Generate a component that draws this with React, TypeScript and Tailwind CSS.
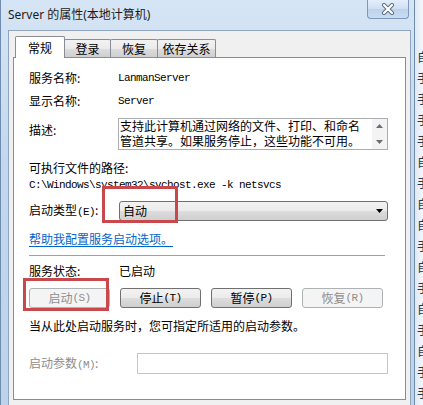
const mono = "font-['Liberation_Mono','Noto_Sans_CJK_SC',monospace] text-[11px] tracking-[-0.6px]"

function Btn({ cjk, key2, disabled }: { cjk: string; key2: string; disabled?: boolean }) {
  return (
    <div
      className={
        disabled
          ? 'w-[81px] h-[20px] rounded-[3px] border border-[#adb2b5] bg-[#f4f4f4] text-[#8d8d8d] flex items-center justify-center'
          : 'w-[81px] h-[20px] rounded-[3px] border border-[#707070] bg-[linear-gradient(#f2f2f2,#ebebeb_50%,#dddddd_50%,#cfcfcf)] flex items-center justify-center'
      }
    >
      <span className="leading-[16px]">{cjk}</span>
      <span className={mono}>({key2})</span>
    </div>
  )
}

function Tab({ label, w, active }: { label: string; w: string; active?: boolean }) {
  return active ? (
    <div className={`${w} h-[22px] -mb-px relative z-10 bg-white border border-b-0 border-[#898c95] rounded-t-[2px] flex items-start justify-center pt-[3px] leading-[16px]`}>
      {label}
    </div>
  ) : (
    <div className={`${w} h-[18px] -ml-px border border-b-0 border-[#898c95] rounded-t-[2px] bg-[linear-gradient(#f2f2f2,#ebebeb_50%,#dddddd_50%,#cfcfcf)] flex items-start justify-center pt-[1px] leading-[16px]`}>
      {label}
    </div>
  )
}

export default function App() {
  return (
    <div className="w-[423px] h-[405px] overflow-hidden flex bg-white font-['Noto_Sans_CJK_SC',sans-serif] text-[12px] text-black">
      {/* window frame */}
      <div className="w-[415px] h-full flex flex-col bg-[linear-gradient(#d6e5f5,#c3d8ee_40%,#bcd3eb)] border-l border-r border-[#6f8bad]">
        {/* title bar */}
        <div className="h-[30px] flex items-start justify-between">
          <div className="pl-[7px] pt-[7px] leading-[16px] font-['Noto_Sans','Noto_Sans_CJK_SC',sans-serif] text-[#1b1b1b]">
            Server 的属性(本地计算机)
          </div>
          <div className="mr-[5px] w-[42px] h-[19px] rounded-b-[4px] border border-t-0 border-[#7d98ba] bg-[linear-gradient(#e4eefa,#cddff3_50%,#bcd2ec_50%,#c9dcf1)] flex items-center justify-center">
            <svg width="14" height="12" viewBox="0 0 14 12">
              <path d="M3 2 L11 10 M11 2 L3 10" stroke="#59687a" strokeWidth="4" strokeLinecap="round" />
              <path d="M3 2 L11 10 M11 2 L3 10" stroke="#ffffff" strokeWidth="2.2" strokeLinecap="round" />
            </svg>
          </div>
        </div>

        {/* client area */}
        <div className="flex-1 ml-[7px] mr-[3px] bg-[#f0f0f0] border border-b-0 border-[#8ea4bf] px-[4px] pt-[5px] flex flex-col">
          {/* tabs */}
          <div className="flex items-end ml-[2px]">
            <Tab label="常规" w="w-[50px]" active />
            <Tab label="登录" w="w-[47px]" />
            <Tab label="恢复" w="w-[48px]" />
            <Tab label="依存关系" w="w-[59px]" />
          </div>

          {/* tab panel */}
          <div className="relative h-[343px] bg-white border border-[#898c95] pl-[15px] pr-[17px] flex flex-col">
            <div className="mt-[12px] flex leading-[16px]">
              <div className="w-[89px]">服务名称:</div>
              <div className={mono + ' leading-[16px]'}>LanmanServer</div>
            </div>
            <div className="mt-[7px] flex leading-[16px]">
              <div className="w-[89px]">显示名称:</div>
              <div className={mono + ' leading-[16px]'}>Server</div>
            </div>
            <div className="mt-[9px] flex">
              <div className="w-[89px] pt-[4px] leading-[16px]">描述:</div>
              <div className="flex-1 h-[32px] border border-[#abadb3] flex">
                <div className="flex-1 pl-[1px] leading-[15px] -mt-[1px] overflow-hidden">
                  <div>支持此计算机通过网络的文件、打印、和命名</div>
                  <div>管道共享。如果服务停止，这些功能不可用。</div>
                </div>
                <div className="w-[15px] bg-[#f3f3f3] flex flex-col items-center justify-between py-[5px]">
                  <svg width="7" height="4" viewBox="0 0 7 4"><path d="M0 4 L3.5 0 L7 4 Z" fill="#6e6e6e" /></svg>
                  <svg width="7" height="4" viewBox="0 0 7 4"><path d="M0 0 L7 0 L3.5 4 Z" fill="#6e6e6e" /></svg>
                </div>
              </div>
            </div>
            <div className="mt-[10px] leading-[16px]">可执行文件的路径:</div>
            <div className={mono + ' leading-[16px] mt-[1px]'}>C:\Windows\system32\svchost.exe -k netsvcs</div>
            <div className="mt-[8px] flex items-center h-[20px]">
              <div className="w-[90px] leading-[16px]">
                启动类型<span className={mono}>(E)</span>:
              </div>
              <div className="flex-1 h-[20px] rounded-[3px] border border-[#707070] bg-[linear-gradient(#f2f2f2,#ebebeb_50%,#dddddd_50%,#cfcfcf)] flex items-center justify-between pl-[3px] pr-[4px]">
                <span className="leading-[16px]">自动</span>
                <svg width="7" height="4" viewBox="0 0 7 4"><path d="M0 0 L7 0 L3.5 4 Z" fill="#000" /></svg>
              </div>
            </div>
            <div className="mt-[10px] leading-[16px] text-[#0066cc] underline underline-offset-2">帮助我配置服务启动选项。</div>
            <div className="mt-[8px] mr-[3px] border-t border-[#a0a0a0] border-b border-b-white" />
            <div className="mt-[6px] flex leading-[16px]">
              <div className="w-[90px]">服务状态:</div>
              <div>已启动</div>
            </div>
            <div className="mt-[9px] flex gap-[10px]">
              <Btn cjk="启动" key2="S" disabled />
              <Btn cjk="停止" key2="T" />
              <Btn cjk="暂停" key2="P" />
              <Btn cjk="恢复" key2="R" disabled />
            </div>
            <div className="mt-[10px] leading-[16px]">当从此处启动服务时，您可指定所适用的启动参数。</div>
            <div className="mt-[19px] flex items-center">
              <div className="w-[108px] text-[#8d8d8d] leading-[16px]">
                启动参数<span className={mono}>(M)</span>:
              </div>
              <div className="flex-1 h-[21px] border border-[#c3c6cc] bg-white" />
            </div>

            {/* red highlight boxes */}
            <div className="absolute left-[88px] top-[128px] w-[76px] h-[37px] border-[3px] border-[#c9484b]" />
            <div className="absolute left-[9px] top-[220px] w-[86px] h-[33px] border-[3px] border-[#c9484b]" />
          </div>
        </div>
      </div>

      {/* background window peeking out */}
      <div className="w-[8px] h-full overflow-hidden bg-[linear-gradient(90deg,#dfe9f5,#f4f7fb)] pl-[2px]">
        <div className="leading-[21px] text-[#24364f] pt-[46px] w-[20px]">
          {['自', '手', '手', '手', '手', '自', '手', '自', '自', '手', '自', '手', '自', '手', '自', '手', '手'].map((c, i) => (
            <div key={i}>{c}</div>
          ))}
        </div>
      </div>
    </div>
  )
}
